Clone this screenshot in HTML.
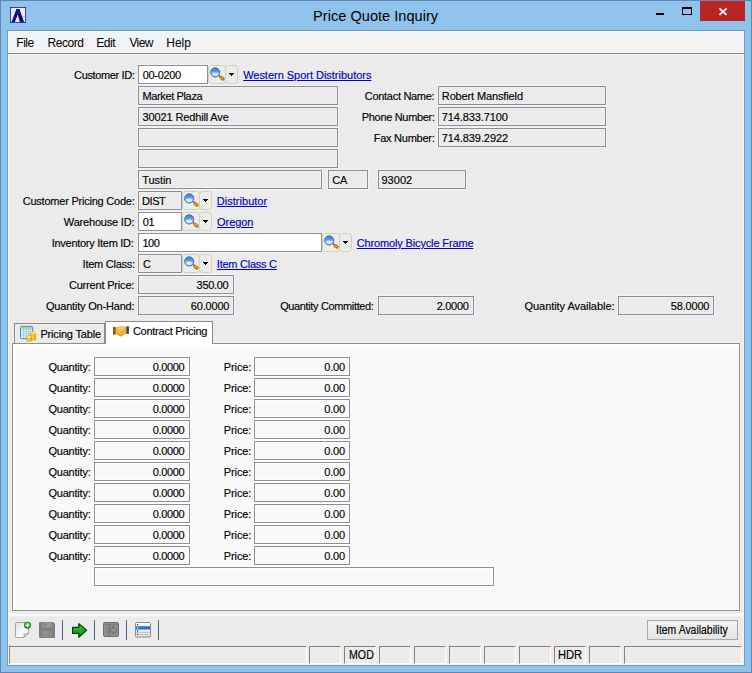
<!DOCTYPE html>
<html lang="en"><head><meta charset="utf-8"><title>Price Quote Inquiry</title>
<style>
html,body{margin:0;padding:0;}
body{width:752px;height:673px;overflow:hidden;position:relative;background:#8fc3eb;font-family:"Liberation Sans",Arial,sans-serif;}
.abs,.b,.t,.i,.sp{position:absolute;}
.b{box-sizing:content-box;}
.t{white-space:nowrap;line-height:20px;height:20px;-webkit-text-stroke:0.15px;}
.sp{top:646px;height:16px;border:1px solid;border-color:#8a846e #fff #fff #8a846e;background:#ebebeb;}
</style></head><body>
<svg width="0" height="0" style="position:absolute"><defs>
<linearGradient id="lens" x1="0" y1="0" x2="0" y2="1"><stop offset="0" stop-color="#3b86ea"/><stop offset="0.35" stop-color="#3f92f5"/><stop offset="0.6" stop-color="#8cc6ff"/><stop offset="1" stop-color="#7db8f5"/></linearGradient>
</defs></svg>
<!-- window frame -->
<div class="abs" style="left:0;top:0;width:750px;height:671px;border:1px solid #5f86b4;"></div>
<div class="abs" style="left:700px;top:1px;width:45px;height:20px;background:#b92525;"></div>
<svg class="i" style="left:640px;top:0" width="112" height="30" viewBox="640 0 112 30">
<rect x="656" y="13" width="8" height="2" fill="#000"/>
<rect x="682.5" y="8" width="9" height="6.5" fill="none" stroke="#000" stroke-width="1"/><rect x="682" y="7" width="10" height="2" fill="#000"/>
<path d="M719.4 8.3l7.2 6.5M726.6 8.3l-7.2 6.5" stroke="#fff" stroke-width="1.8" fill="none"/>
</svg>
<!-- app icon -->
<svg class="i" style="left:10px;top:7px" width="16" height="16" viewBox="10 7 16 16"><rect x="10.500" y="7.500" width="15" height="15" fill="#eeeefb" stroke="#3d3dba"/><path d="M10 7h1v1h-1zM25 7h1v1h-1zM10 22h1v1h-1zM25 22h1v1h-1z" fill="#15158f"/><path d="M13 17.200c3-1.200 8 .8 12-.8" stroke="#f2c24a" stroke-width="0.800" fill="none"/><path d="M11.600 22L16.400 8.900h3L24.100 22h-4.300L17.700 14.400 14.900 22z" fill="#0d0d8a"/></svg>
<!-- client -->
<div class="abs" style="left:7px;top:30px;width:736px;height:634px;border:1px solid #6f9ac6;background:#ebebeb;box-shadow:inset 0 0 0 1px #f6f5f3;"></div>
<div class="abs" style="left:9px;top:32px;width:734px;height:20px;background:#f2f3f5;"></div>
<div class="abs" style="left:8px;top:31px;width:736px;height:1px;background:#faf9f7;"></div>
<div class="abs" style="left:9px;top:52px;width:734px;height:1px;background:#f9fafb;"></div>
<div class="abs" style="left:8px;top:53px;width:736px;height:1px;background:#868686;"></div>
<div class="abs" style="left:9px;top:54px;width:734px;height:1px;background:#ffffff;"></div>
<div class="b" style="left:138px;top:65px;width:68px;height:17px;background:#ffffff;border:1px solid #8b8d9b;box-shadow:0 0 0 1px #f3f3f3;"></div>
<div class="b" style="left:138px;top:86px;width:198px;height:17px;background:#ebebeb;border:1px solid #8b8d9b;box-shadow:0 0 0 1px #f3f3f3, inset 0 0 0 1px #f0f0f0;"></div>
<div class="b" style="left:138px;top:107px;width:198px;height:17px;background:#ebebeb;border:1px solid #8b8d9b;box-shadow:0 0 0 1px #f3f3f3, inset 0 0 0 1px #f0f0f0;"></div>
<div class="b" style="left:138px;top:128px;width:198px;height:17px;background:#ebebeb;border:1px solid #8b8d9b;box-shadow:0 0 0 1px #f3f3f3, inset 0 0 0 1px #f0f0f0;"></div>
<div class="b" style="left:138px;top:149px;width:198px;height:17px;background:#ebebeb;border:1px solid #8b8d9b;box-shadow:0 0 0 1px #f3f3f3, inset 0 0 0 1px #f0f0f0;"></div>
<div class="b" style="left:138px;top:170px;width:182px;height:17px;background:#ebebeb;border:1px solid #8b8d9b;box-shadow:0 0 0 1px #f3f3f3, inset 0 0 0 1px #f0f0f0;"></div>
<div class="b" style="left:328px;top:170px;width:38px;height:17px;background:#ebebeb;border:1px solid #8b8d9b;box-shadow:0 0 0 1px #f3f3f3, inset 0 0 0 1px #f0f0f0;"></div>
<div class="b" style="left:378px;top:170px;width:86px;height:17px;background:#ebebeb;border:1px solid #8b8d9b;box-shadow:0 0 0 1px #f3f3f3, inset 0 0 0 1px #f0f0f0;"></div>
<div class="b" style="left:438px;top:86px;width:166px;height:17px;background:#ebebeb;border:1px solid #8b8d9b;box-shadow:0 0 0 1px #f3f3f3, inset 0 0 0 1px #f0f0f0;"></div>
<div class="b" style="left:438px;top:107px;width:166px;height:17px;background:#ebebeb;border:1px solid #8b8d9b;box-shadow:0 0 0 1px #f3f3f3, inset 0 0 0 1px #f0f0f0;"></div>
<div class="b" style="left:438px;top:128px;width:166px;height:17px;background:#ebebeb;border:1px solid #8b8d9b;box-shadow:0 0 0 1px #f3f3f3, inset 0 0 0 1px #f0f0f0;"></div>
<div class="b" style="left:138px;top:191px;width:42px;height:17px;background:#ebebeb;border:1px solid #8b8d9b;box-shadow:0 0 0 1px #f3f3f3, inset 0 0 0 1px #f0f0f0;"></div>
<div class="b" style="left:138px;top:212px;width:42px;height:17px;background:#ffffff;border:1px solid #8b8d9b;box-shadow:0 0 0 1px #f3f3f3;"></div>
<div class="b" style="left:138px;top:233px;width:182px;height:17px;background:#ffffff;border:1px solid #8b8d9b;box-shadow:0 0 0 1px #f3f3f3;"></div>
<div class="b" style="left:138px;top:254px;width:42px;height:17px;background:#ebebeb;border:1px solid #8b8d9b;box-shadow:0 0 0 1px #f3f3f3, inset 0 0 0 1px #f0f0f0;"></div>
<div class="b" style="left:138px;top:275px;width:94px;height:17px;background:#ebebeb;border:1px solid #8b8d9b;box-shadow:0 0 0 1px #f3f3f3, inset 0 0 0 1px #f0f0f0;"></div>
<div class="b" style="left:138px;top:296px;width:94px;height:17px;background:#ebebeb;border:1px solid #8b8d9b;box-shadow:0 0 0 1px #f3f3f3, inset 0 0 0 1px #f0f0f0;"></div>
<div class="b" style="left:378px;top:296px;width:94px;height:17px;background:#ebebeb;border:1px solid #8b8d9b;box-shadow:0 0 0 1px #f3f3f3, inset 0 0 0 1px #f0f0f0;"></div>
<div class="b" style="left:618px;top:296px;width:94px;height:17px;background:#ebebeb;border:1px solid #8b8d9b;box-shadow:0 0 0 1px #f3f3f3, inset 0 0 0 1px #f0f0f0;"></div>
<svg class="i" style="left:208px;top:65px" width="18" height="19" viewBox="0 0 18 19">
<rect x="0.5" y="0.5" width="17" height="18" rx="3" fill="#ececeb" stroke="#d0d0bd"/>
<line x1="11" y1="10.6" x2="13" y2="12" stroke="#6a4a3a" stroke-width="1.5"/>
<line x1="13.2" y1="12.6" x2="14.9" y2="13.9" stroke="#9a5a10" stroke-width="3.4" stroke-linecap="round"/>
<line x1="13.2" y1="12.5" x2="14.8" y2="13.7" stroke="#f59a0a" stroke-width="2.2" stroke-linecap="round"/>
<circle cx="7.2" cy="7.4" r="4.6" fill="url(#lens)" stroke="#5e6690" stroke-width="1"/>
<ellipse cx="7.2" cy="9.3" rx="3" ry="1.7" fill="#e6f5ff" opacity="0.85"/>
</svg><svg class="i" style="left:225px;top:65px" width="13" height="19" viewBox="0 0 13 19">
<rect x="0.5" y="0.5" width="12" height="18" rx="3" fill="#ececeb" stroke="#d0d0bd"/>
<path d="M4 8h5v1h-1v1h-1v1h-1v-1h-1v-1h-1z" fill="#000"/>
</svg><svg class="i" style="left:182px;top:191px" width="18" height="19" viewBox="0 0 18 19">
<rect x="0.5" y="0.5" width="17" height="18" rx="3" fill="#ececeb" stroke="#d0d0bd"/>
<line x1="11" y1="10.6" x2="13" y2="12" stroke="#6a4a3a" stroke-width="1.5"/>
<line x1="13.2" y1="12.6" x2="14.9" y2="13.9" stroke="#9a5a10" stroke-width="3.4" stroke-linecap="round"/>
<line x1="13.2" y1="12.5" x2="14.8" y2="13.7" stroke="#f59a0a" stroke-width="2.2" stroke-linecap="round"/>
<circle cx="7.2" cy="7.4" r="4.6" fill="url(#lens)" stroke="#5e6690" stroke-width="1"/>
<ellipse cx="7.2" cy="9.3" rx="3" ry="1.7" fill="#e6f5ff" opacity="0.85"/>
</svg><svg class="i" style="left:199px;top:191px" width="13" height="19" viewBox="0 0 13 19">
<rect x="0.5" y="0.5" width="12" height="18" rx="3" fill="#ececeb" stroke="#d0d0bd"/>
<path d="M4 8h5v1h-1v1h-1v1h-1v-1h-1v-1h-1z" fill="#000"/>
</svg><svg class="i" style="left:182px;top:212px" width="18" height="19" viewBox="0 0 18 19">
<rect x="0.5" y="0.5" width="17" height="18" rx="3" fill="#ececeb" stroke="#d0d0bd"/>
<line x1="11" y1="10.6" x2="13" y2="12" stroke="#6a4a3a" stroke-width="1.5"/>
<line x1="13.2" y1="12.6" x2="14.9" y2="13.9" stroke="#9a5a10" stroke-width="3.4" stroke-linecap="round"/>
<line x1="13.2" y1="12.5" x2="14.8" y2="13.7" stroke="#f59a0a" stroke-width="2.2" stroke-linecap="round"/>
<circle cx="7.2" cy="7.4" r="4.6" fill="url(#lens)" stroke="#5e6690" stroke-width="1"/>
<ellipse cx="7.2" cy="9.3" rx="3" ry="1.7" fill="#e6f5ff" opacity="0.85"/>
</svg><svg class="i" style="left:199px;top:212px" width="13" height="19" viewBox="0 0 13 19">
<rect x="0.5" y="0.5" width="12" height="18" rx="3" fill="#ececeb" stroke="#d0d0bd"/>
<path d="M4 8h5v1h-1v1h-1v1h-1v-1h-1v-1h-1z" fill="#000"/>
</svg><svg class="i" style="left:322px;top:233px" width="18" height="19" viewBox="0 0 18 19">
<rect x="0.5" y="0.5" width="17" height="18" rx="3" fill="#ececeb" stroke="#d0d0bd"/>
<line x1="11" y1="10.6" x2="13" y2="12" stroke="#6a4a3a" stroke-width="1.5"/>
<line x1="13.2" y1="12.6" x2="14.9" y2="13.9" stroke="#9a5a10" stroke-width="3.4" stroke-linecap="round"/>
<line x1="13.2" y1="12.5" x2="14.8" y2="13.7" stroke="#f59a0a" stroke-width="2.2" stroke-linecap="round"/>
<circle cx="7.2" cy="7.4" r="4.6" fill="url(#lens)" stroke="#5e6690" stroke-width="1"/>
<ellipse cx="7.2" cy="9.3" rx="3" ry="1.7" fill="#e6f5ff" opacity="0.85"/>
</svg><svg class="i" style="left:339px;top:233px" width="13" height="19" viewBox="0 0 13 19">
<rect x="0.5" y="0.5" width="12" height="18" rx="3" fill="#ececeb" stroke="#d0d0bd"/>
<path d="M4 8h5v1h-1v1h-1v1h-1v-1h-1v-1h-1z" fill="#000"/>
</svg><svg class="i" style="left:182px;top:254px" width="18" height="19" viewBox="0 0 18 19">
<rect x="0.5" y="0.5" width="17" height="18" rx="3" fill="#ececeb" stroke="#d0d0bd"/>
<line x1="11" y1="10.6" x2="13" y2="12" stroke="#6a4a3a" stroke-width="1.5"/>
<line x1="13.2" y1="12.6" x2="14.9" y2="13.9" stroke="#9a5a10" stroke-width="3.4" stroke-linecap="round"/>
<line x1="13.2" y1="12.5" x2="14.8" y2="13.7" stroke="#f59a0a" stroke-width="2.2" stroke-linecap="round"/>
<circle cx="7.2" cy="7.4" r="4.6" fill="url(#lens)" stroke="#5e6690" stroke-width="1"/>
<ellipse cx="7.2" cy="9.3" rx="3" ry="1.7" fill="#e6f5ff" opacity="0.85"/>
</svg><svg class="i" style="left:199px;top:254px" width="13" height="19" viewBox="0 0 13 19">
<rect x="0.5" y="0.5" width="12" height="18" rx="3" fill="#ececeb" stroke="#d0d0bd"/>
<path d="M4 8h5v1h-1v1h-1v1h-1v-1h-1v-1h-1z" fill="#000"/>
</svg>
<!-- tabs -->
<div class="abs" style="left:11px;top:342px;width:730px;height:270px;background:#f2f2f2;"></div>
<div class="abs" style="left:12px;top:343px;width:726px;height:266px;background:linear-gradient(#fff 0,#fff 3px,#f9f9f9 4px);border:1px solid #8e8e8e;box-shadow:inset 1px 0 0 #fff, inset 0 -1px 0 #fff;"></div>
<div class="abs" style="left:14px;top:323px;width:91px;height:20px;background:#ebebeb;border:1px solid #8c8c8c;border-bottom:none;box-sizing:border-box;"></div>
<div class="abs" style="left:105px;top:321px;width:108px;height:23px;background:#ffffff;border:1px solid #8c8c8c;border-bottom:none;box-sizing:border-box;"></div>
<div class="b" style="left:94px;top:357px;width:94px;height:17px;background:#f9f9f9;border:1px solid #8b8d9b;box-shadow:0 0 0 1px #fff, inset 0 0 0 1px #fff"></div>
<div class="b" style="left:254px;top:357px;width:94px;height:17px;background:#f9f9f9;border:1px solid #8b8d9b;box-shadow:0 0 0 1px #fff, inset 0 0 0 1px #fff"></div>
<div class="b" style="left:94px;top:378px;width:94px;height:17px;background:#f9f9f9;border:1px solid #8b8d9b;box-shadow:0 0 0 1px #fff, inset 0 0 0 1px #fff"></div>
<div class="b" style="left:254px;top:378px;width:94px;height:17px;background:#f9f9f9;border:1px solid #8b8d9b;box-shadow:0 0 0 1px #fff, inset 0 0 0 1px #fff"></div>
<div class="b" style="left:94px;top:399px;width:94px;height:17px;background:#f9f9f9;border:1px solid #8b8d9b;box-shadow:0 0 0 1px #fff, inset 0 0 0 1px #fff"></div>
<div class="b" style="left:254px;top:399px;width:94px;height:17px;background:#f9f9f9;border:1px solid #8b8d9b;box-shadow:0 0 0 1px #fff, inset 0 0 0 1px #fff"></div>
<div class="b" style="left:94px;top:420px;width:94px;height:17px;background:#f9f9f9;border:1px solid #8b8d9b;box-shadow:0 0 0 1px #fff, inset 0 0 0 1px #fff"></div>
<div class="b" style="left:254px;top:420px;width:94px;height:17px;background:#f9f9f9;border:1px solid #8b8d9b;box-shadow:0 0 0 1px #fff, inset 0 0 0 1px #fff"></div>
<div class="b" style="left:94px;top:441px;width:94px;height:17px;background:#f9f9f9;border:1px solid #8b8d9b;box-shadow:0 0 0 1px #fff, inset 0 0 0 1px #fff"></div>
<div class="b" style="left:254px;top:441px;width:94px;height:17px;background:#f9f9f9;border:1px solid #8b8d9b;box-shadow:0 0 0 1px #fff, inset 0 0 0 1px #fff"></div>
<div class="b" style="left:94px;top:462px;width:94px;height:17px;background:#f9f9f9;border:1px solid #8b8d9b;box-shadow:0 0 0 1px #fff, inset 0 0 0 1px #fff"></div>
<div class="b" style="left:254px;top:462px;width:94px;height:17px;background:#f9f9f9;border:1px solid #8b8d9b;box-shadow:0 0 0 1px #fff, inset 0 0 0 1px #fff"></div>
<div class="b" style="left:94px;top:483px;width:94px;height:17px;background:#f9f9f9;border:1px solid #8b8d9b;box-shadow:0 0 0 1px #fff, inset 0 0 0 1px #fff"></div>
<div class="b" style="left:254px;top:483px;width:94px;height:17px;background:#f9f9f9;border:1px solid #8b8d9b;box-shadow:0 0 0 1px #fff, inset 0 0 0 1px #fff"></div>
<div class="b" style="left:94px;top:504px;width:94px;height:17px;background:#f9f9f9;border:1px solid #8b8d9b;box-shadow:0 0 0 1px #fff, inset 0 0 0 1px #fff"></div>
<div class="b" style="left:254px;top:504px;width:94px;height:17px;background:#f9f9f9;border:1px solid #8b8d9b;box-shadow:0 0 0 1px #fff, inset 0 0 0 1px #fff"></div>
<div class="b" style="left:94px;top:525px;width:94px;height:17px;background:#f9f9f9;border:1px solid #8b8d9b;box-shadow:0 0 0 1px #fff, inset 0 0 0 1px #fff"></div>
<div class="b" style="left:254px;top:525px;width:94px;height:17px;background:#f9f9f9;border:1px solid #8b8d9b;box-shadow:0 0 0 1px #fff, inset 0 0 0 1px #fff"></div>
<div class="b" style="left:94px;top:546px;width:94px;height:17px;background:#f9f9f9;border:1px solid #8b8d9b;box-shadow:0 0 0 1px #fff, inset 0 0 0 1px #fff"></div>
<div class="b" style="left:254px;top:546px;width:94px;height:17px;background:#f9f9f9;border:1px solid #8b8d9b;box-shadow:0 0 0 1px #fff, inset 0 0 0 1px #fff"></div>
<div class="b" style="left:94px;top:567px;width:398px;height:17px;background:#f9f9f9;border:1px solid #8b8d9b;box-shadow:0 0 0 1px #fff, inset 0 0 0 1px #fff"></div>
<!-- toolbar -->
<div class="abs" style="left:9px;top:614px;width:734px;height:1px;background:#fff;"></div><div class="abs" style="left:9px;top:615px;width:734px;height:1px;background:#f6f8fb;"></div><div class="abs" style="left:9px;top:616px;width:734px;height:1px;background:#eceff3;"></div>
<div class="abs" style="left:62px;top:620px;width:1px;height:20px;background:#4d6382;"></div>
<div class="abs" style="left:94px;top:620px;width:1px;height:20px;background:#4d6382;"></div>
<div class="abs" style="left:126px;top:620px;width:1px;height:20px;background:#4d6382;"></div>
<div class="abs" style="left:158px;top:620px;width:1px;height:20px;background:#4d6382;"></div>
<div class="abs" style="left:647px;top:620px;width:91px;height:20px;box-sizing:border-box;border:1px solid #a8a8a8;background:linear-gradient(#f3f3f3,#e3e3e3);"></div>

<!-- new doc -->
<svg class="i" style="left:14px;top:620px" width="20" height="20" viewBox="14 620 20 20">
<defs><linearGradient id="pg" x1="0" y1="0" x2="1" y2="1"><stop offset="0" stop-color="#dedfdf"/><stop offset="0.5" stop-color="#f6f6f6"/><stop offset="1" stop-color="#ffffff"/></linearGradient>
<radialGradient id="gp" cx="0.5" cy="0.35" r="0.7"><stop offset="0" stop-color="#3cc43c"/><stop offset="1" stop-color="#0c8a10"/></radialGradient></defs>
<path d="M16.5 622.5h9.5l2.5 2.5v8l-4.5 4.5h-7.5a1 1 0 0 1-1-1v-13a1 1 0 0 1 1-1z" fill="url(#pg)" stroke="#a2a2a2"/>
<path d="M28.3 633.2l-4.2 4.2c.4-1.6.2-2.6-.3-3.6 1.400.5 3 .4 4.500-.6z" fill="#fdfdfd" stroke="#8d8d8d" stroke-width="0.8"/>
<circle cx="27.500" cy="625.300" r="3.300" fill="url(#gp)" stroke="#0a7a0e" stroke-width="0.500"/>
<path d="M27.500 623.300v4M25.500 625.300h4" stroke="#fff" stroke-width="1.300"/>
</svg>
<!-- save (disabled) -->
<svg class="i" style="left:38px;top:620px" width="20" height="20" viewBox="38 620 20 20">
<path d="M40 622h13.200l1.800 1.800v13.200a1 1 0 0 1-1 1h-14a1 1 0 0 1-1-1v-14a1 1 0 0 1 1-1z" fill="#7f7f7f"/>
<rect x="42" y="622.500" width="10" height="5" fill="#959595"/><rect x="44" y="623.300" width="1.300" height="3" fill="#7a7a7a"/>
<rect x="42.500" y="631.300" width="9" height="5.200" fill="#929292" stroke="#8a8a8a" stroke-width="0.600"/><path d="M43.500 633.200h7M43.500 634.800h7" stroke="#858585" stroke-width="0.700"/>
</svg>
<!-- green arrow -->
<svg class="i" style="left:70px;top:620px" width="20" height="20" viewBox="70 620 20 20">
<defs><linearGradient id="ga" x1="0" y1="0" x2="0" y2="1"><stop offset="0" stop-color="#35c935"/><stop offset="0.5" stop-color="#1eac22"/><stop offset="1" stop-color="#0e8a14"/></linearGradient></defs>
<path d="M72.600 627.300h6.200v-3.700l7.800 6.700-7.800 6.900v-3.800h-6.200z" fill="url(#ga)" stroke="#093d0b" stroke-width="1.200" stroke-linejoin="round"/>
</svg>
<!-- gray export icon -->
<svg class="i" style="left:102px;top:620px" width="20" height="20" viewBox="102 620 20 20">
<rect x="103.500" y="622.500" width="15" height="14" rx="1.200" fill="#8f8f8f" stroke="#6e6e6e" stroke-width="1"/>
<path d="M104.500 624.400h13" stroke="#787878" stroke-width="0.800"/>
<path d="M109.400 624.400v12" stroke="#6e6e6e" stroke-width="0.900"/>
<path d="M106.900 626.400h1M106.900 628.700h1M106.900 631h1M106.900 633.300h1" stroke="#666" stroke-width="1"/>
<path d="M110.600 628.300h2.500v-2.200l3.900 4.100-3.900 4.100v-2.200h-2.500z" fill="#929292" stroke="#6a6a6a" stroke-width="0.900" stroke-linejoin="round"/>
</svg>
<!-- list icon -->
<svg class="i" style="left:134px;top:620px" width="20" height="20" viewBox="134 620 20 20">
<defs><linearGradient id="li" x1="0" y1="0" x2="0" y2="1"><stop offset="0" stop-color="#ffffff"/><stop offset="1" stop-color="#e2e2e2"/></linearGradient></defs>
<rect x="135.500" y="622.500" width="15" height="14.500" rx="1.200" fill="url(#li)" stroke="#8a8a8a"/>
<rect x="136" y="626.200" width="14" height="3.300" fill="#1f74dc"/>
<path d="M136 632.500h14" stroke="#bdbdbd" stroke-width="0.800"/>
<rect x="137" y="624" width="1.200" height="1.200" fill="#222"/><rect x="137" y="627.300" width="1.200" height="1.200" fill="#fff"/><rect x="137" y="630.300" width="1.200" height="1.200" fill="#222"/><rect x="137" y="633.800" width="1.200" height="1.200" fill="#222"/>
<path d="M139.500 634.400h9" stroke="#b0b0b0" stroke-width="0.800"/>
</svg>
<!-- tab icon: pricing table -->
<svg class="i" style="left:19px;top:324px" width="19" height="19" viewBox="19 324 19 19">
<defs><linearGradient id="gold" x1="0" y1="0" x2="1" y2="0"><stop offset="0" stop-color="#e9a400"/><stop offset="0.45" stop-color="#ffd83a"/><stop offset="1" stop-color="#e69a00"/></linearGradient></defs>
<rect x="20.500" y="326.400" width="12.200" height="12.200" rx="1" fill="#eaf6ff" stroke="#3f8cc6" stroke-width="1"/>
<rect x="21.300" y="327.200" width="10.600" height="1.400" fill="#f7b620"/>
<path d="M21.300 329.300h10.600M21.300 331.500h10.600M21.300 333.700h10.600M21.300 335.900h10.600M23.800 327v11M26.400 327v11M28.600 327v11M30.300 327v11" stroke="#8cc4ee" stroke-width="0.700"/>
<rect x="30.300" y="332.400" width="5.500" height="7.800" rx="1.500" fill="url(#gold)" stroke="#d89000" stroke-width="0.500"/>
<ellipse cx="33.050" cy="333" rx="2.700" ry="1" fill="#ffe36a"/>
<path d="M30.400 335h5.300M30.400 337.200h5.300" stroke="#f0b010" stroke-width="0.600"/>
<rect x="26.300" y="336.200" width="5.300" height="5" rx="1.500" fill="url(#gold)" stroke="#d89000" stroke-width="0.500"/>
<ellipse cx="28.950" cy="336.900" rx="2.600" ry="1" fill="#ffe36a"/>
</svg>
<!-- tab icon: handshake -->
<svg class="i" style="left:112px;top:324px" width="19" height="15" viewBox="112 324 19 15">
<defs><radialGradient id="hs" cx="0.45" cy="0.3" r="0.8"><stop offset="0" stop-color="#fbd48a"/><stop offset="0.6" stop-color="#f4ae28"/><stop offset="1" stop-color="#e89a10"/></radialGradient></defs>
<path d="M115.600 327.400c2-.6 3.400-1.500 5.200-1.500 1.700 0 3.600.7 5.800 1.200v6c-1.500 1-3.200 2.400-5.300 3.300-1.600.3-3.800-1.500-5.700-2.700z" fill="url(#hs)"/>
<path d="M118 329.500l4 3.500M120 328.600l4 3.400M117.500 332l2.500 2.300" stroke="#e0962a" stroke-width="0.600" fill="none"/>
<rect x="113" y="327" width="2.700" height="7.600" fill="#8c5a0e"/>
<rect x="126.400" y="326.200" width="2.500" height="7.700" fill="#3a4152"/>
</svg>

<!-- status -->
<div class="sp" style="left:9px;width:296px"></div>
<div class="sp" style="left:309px;width:30px"></div>
<div class="sp" style="left:344px;width:30px"></div>
<div class="sp" style="left:379px;width:30px"></div>
<div class="sp" style="left:414px;width:30px"></div>
<div class="sp" style="left:449px;width:30px"></div>
<div class="sp" style="left:484px;width:30px"></div>
<div class="sp" style="left:519px;width:30px"></div>
<div class="sp" style="left:554px;width:30px"></div>
<div class="sp" style="left:589px;width:30px"></div>
<div class="sp" style="left:624px;width:116px"></div>

<span class="t" style="left:313.08px;top:6.00px;font-size:14.5px;color:#000;letter-spacing:0.05px;-webkit-text-stroke:0;">Price Quote Inquiry</span>
<span class="t" style="left:16.29px;top:33.00px;font-size:12px;color:#000;letter-spacing:-0.46px;-webkit-text-stroke:0;">File</span>
<span class="t" style="left:47.55px;top:33.00px;font-size:12px;color:#000;letter-spacing:-0.48px;-webkit-text-stroke:0;">Record</span>
<span class="t" style="left:96.14px;top:33.00px;font-size:12px;color:#000;letter-spacing:-0.40px;-webkit-text-stroke:0;">Edit</span>
<span class="t" style="left:129.38px;top:33.00px;font-size:12px;color:#000;letter-spacing:-0.58px;-webkit-text-stroke:0;">View</span>
<span class="t" style="left:166.35px;top:33.00px;font-size:12px;color:#000;letter-spacing:-0.07px;-webkit-text-stroke:0;">Help</span>
<span class="t" style="left:74.10px;top:65.00px;font-size:11px;color:#000;letter-spacing:-0.37px;">Customer ID:</span>
<span class="t" style="left:22.67px;top:191.00px;font-size:11px;color:#000;letter-spacing:-0.22px;">Customer Pricing Code:</span>
<span class="t" style="left:63.86px;top:212.00px;font-size:11px;color:#000;letter-spacing:-0.19px;">Warehouse ID:</span>
<span class="t" style="left:51.76px;top:233.00px;font-size:11px;color:#000;letter-spacing:-0.28px;">Inventory Item ID:</span>
<span class="t" style="left:82.61px;top:254.00px;font-size:11px;color:#000;letter-spacing:-0.25px;">Item Class:</span>
<span class="t" style="left:68.89px;top:275.00px;font-size:11px;color:#000;letter-spacing:-0.18px;">Current Price:</span>
<span class="t" style="left:45.93px;top:296.00px;font-size:11px;color:#000;letter-spacing:-0.19px;">Quantity On-Hand:</span>
<span class="t" style="left:364.83px;top:86.00px;font-size:11px;color:#000;letter-spacing:-0.30px;">Contact Name:</span>
<span class="t" style="left:361.78px;top:107.00px;font-size:11px;color:#000;letter-spacing:-0.32px;">Phone Number:</span>
<span class="t" style="left:373.66px;top:128.00px;font-size:11px;color:#000;letter-spacing:-0.24px;">Fax Number:</span>
<span class="t" style="left:280.14px;top:296.00px;font-size:11px;color:#000;letter-spacing:-0.36px;">Quantity Committed:</span>
<span class="t" style="left:524.50px;top:296.00px;font-size:11px;color:#000;letter-spacing:-0.05px;">Quantity Available:</span>
<span class="t" style="left:142.71px;top:65.00px;font-size:11px;color:#000;letter-spacing:-0.32px;">00-0200</span>
<span class="t" style="left:142.41px;top:86.00px;font-size:11px;color:#000;letter-spacing:-0.36px;">Market Plaza</span>
<span class="t" style="left:142.62px;top:107.00px;font-size:11px;color:#000;letter-spacing:-0.14px;">30021 Redhill Ave</span>
<span class="t" style="left:142.30px;top:170.00px;font-size:11px;color:#000;letter-spacing:-0.10px;">Tustin</span>
<span class="t" style="left:332.28px;top:170.00px;font-size:11px;color:#000;letter-spacing:-0.30px;">CA</span>
<span class="t" style="left:381.45px;top:170.00px;font-size:11px;color:#000;letter-spacing:0.03px;">93002</span>
<span class="t" style="left:441.82px;top:86.00px;font-size:11px;color:#000;letter-spacing:-0.13px;">Robert Mansfield</span>
<span class="t" style="left:441.77px;top:107.00px;font-size:11px;color:#000;letter-spacing:-0.11px;">714.833.7100</span>
<span class="t" style="left:441.78px;top:128.00px;font-size:11px;color:#000;letter-spacing:-0.09px;">714.839.2922</span>
<span class="t" style="left:142.12px;top:191.00px;font-size:11px;color:#000;letter-spacing:-0.45px;">DIST</span>
<span class="t" style="left:142.76px;top:212.00px;font-size:11px;color:#000;letter-spacing:-0.30px;">01</span>
<span class="t" style="left:142.40px;top:233.00px;font-size:11px;color:#000;letter-spacing:-0.45px;">100</span>
<span class="t" style="left:142.92px;top:254.00px;font-size:11px;color:#000;letter-spacing:-0.30px;">C</span>
<span class="t" style="left:196.57px;top:275.00px;font-size:11px;color:#000;letter-spacing:-0.30px;">350.00</span>
<span class="t" style="left:190.76px;top:296.00px;font-size:11px;color:#000;letter-spacing:-0.18px;">60.0000</span>
<span class="t" style="left:436.71px;top:296.00px;font-size:11px;color:#000;letter-spacing:-0.29px;">2.0000</span>
<span class="t" style="left:670.77px;top:296.00px;font-size:11px;color:#000;letter-spacing:-0.18px;">58.0000</span>
<span class="t" style="left:243.13px;top:65.00px;font-size:11px;color:#0000c0;letter-spacing:-0.02px;text-decoration:underline;">Western Sport Distributors</span>
<span class="t" style="left:216.83px;top:191.00px;font-size:11px;color:#0000c0;letter-spacing:0.02px;text-decoration:underline;">Distributor</span>
<span class="t" style="left:217.08px;top:212.00px;font-size:11px;color:#0000c0;letter-spacing:-0.08px;text-decoration:underline;">Oregon</span>
<span class="t" style="left:356.66px;top:233.00px;font-size:11px;color:#0000c0;letter-spacing:-0.14px;text-decoration:underline;">Chromoly Bicycle Frame</span>
<span class="t" style="left:216.85px;top:254.00px;font-size:11px;color:#0000c0;letter-spacing:-0.25px;text-decoration:underline;">Item Class C</span>
<span class="t" style="left:40.43px;top:324.00px;font-size:11px;color:#000;letter-spacing:-0.18px;">Pricing Table</span>
<span class="t" style="left:132.88px;top:321.00px;font-size:11px;color:#000;letter-spacing:-0.25px;">Contract Pricing</span>
<span class="t" style="left:48.41px;top:357.00px;font-size:11px;color:#000;letter-spacing:-0.20px;">Quantity:</span>
<span class="t" style="left:152.67px;top:357.00px;font-size:11px;color:#000;letter-spacing:-0.32px;">0.0000</span>
<span class="t" style="left:223.71px;top:357.00px;font-size:11px;color:#000;letter-spacing:-0.09px;">Price:</span>
<span class="t" style="left:324.33px;top:357.00px;font-size:11px;color:#000;letter-spacing:-0.20px;">0.00</span>
<span class="t" style="left:48.41px;top:378.00px;font-size:11px;color:#000;letter-spacing:-0.20px;">Quantity:</span>
<span class="t" style="left:152.67px;top:378.00px;font-size:11px;color:#000;letter-spacing:-0.32px;">0.0000</span>
<span class="t" style="left:223.71px;top:378.00px;font-size:11px;color:#000;letter-spacing:-0.09px;">Price:</span>
<span class="t" style="left:324.33px;top:378.00px;font-size:11px;color:#000;letter-spacing:-0.20px;">0.00</span>
<span class="t" style="left:48.41px;top:399.00px;font-size:11px;color:#000;letter-spacing:-0.20px;">Quantity:</span>
<span class="t" style="left:152.67px;top:399.00px;font-size:11px;color:#000;letter-spacing:-0.32px;">0.0000</span>
<span class="t" style="left:223.71px;top:399.00px;font-size:11px;color:#000;letter-spacing:-0.09px;">Price:</span>
<span class="t" style="left:324.33px;top:399.00px;font-size:11px;color:#000;letter-spacing:-0.20px;">0.00</span>
<span class="t" style="left:48.41px;top:420.00px;font-size:11px;color:#000;letter-spacing:-0.20px;">Quantity:</span>
<span class="t" style="left:152.67px;top:420.00px;font-size:11px;color:#000;letter-spacing:-0.32px;">0.0000</span>
<span class="t" style="left:223.71px;top:420.00px;font-size:11px;color:#000;letter-spacing:-0.09px;">Price:</span>
<span class="t" style="left:324.33px;top:420.00px;font-size:11px;color:#000;letter-spacing:-0.20px;">0.00</span>
<span class="t" style="left:48.41px;top:441.00px;font-size:11px;color:#000;letter-spacing:-0.20px;">Quantity:</span>
<span class="t" style="left:152.67px;top:441.00px;font-size:11px;color:#000;letter-spacing:-0.32px;">0.0000</span>
<span class="t" style="left:223.71px;top:441.00px;font-size:11px;color:#000;letter-spacing:-0.09px;">Price:</span>
<span class="t" style="left:324.33px;top:441.00px;font-size:11px;color:#000;letter-spacing:-0.20px;">0.00</span>
<span class="t" style="left:48.41px;top:462.00px;font-size:11px;color:#000;letter-spacing:-0.20px;">Quantity:</span>
<span class="t" style="left:152.67px;top:462.00px;font-size:11px;color:#000;letter-spacing:-0.32px;">0.0000</span>
<span class="t" style="left:223.71px;top:462.00px;font-size:11px;color:#000;letter-spacing:-0.09px;">Price:</span>
<span class="t" style="left:324.33px;top:462.00px;font-size:11px;color:#000;letter-spacing:-0.20px;">0.00</span>
<span class="t" style="left:48.41px;top:483.00px;font-size:11px;color:#000;letter-spacing:-0.20px;">Quantity:</span>
<span class="t" style="left:152.67px;top:483.00px;font-size:11px;color:#000;letter-spacing:-0.32px;">0.0000</span>
<span class="t" style="left:223.71px;top:483.00px;font-size:11px;color:#000;letter-spacing:-0.09px;">Price:</span>
<span class="t" style="left:324.33px;top:483.00px;font-size:11px;color:#000;letter-spacing:-0.20px;">0.00</span>
<span class="t" style="left:48.41px;top:504.00px;font-size:11px;color:#000;letter-spacing:-0.20px;">Quantity:</span>
<span class="t" style="left:152.67px;top:504.00px;font-size:11px;color:#000;letter-spacing:-0.32px;">0.0000</span>
<span class="t" style="left:223.71px;top:504.00px;font-size:11px;color:#000;letter-spacing:-0.09px;">Price:</span>
<span class="t" style="left:324.33px;top:504.00px;font-size:11px;color:#000;letter-spacing:-0.20px;">0.00</span>
<span class="t" style="left:48.41px;top:525.00px;font-size:11px;color:#000;letter-spacing:-0.20px;">Quantity:</span>
<span class="t" style="left:152.67px;top:525.00px;font-size:11px;color:#000;letter-spacing:-0.32px;">0.0000</span>
<span class="t" style="left:223.71px;top:525.00px;font-size:11px;color:#000;letter-spacing:-0.09px;">Price:</span>
<span class="t" style="left:324.33px;top:525.00px;font-size:11px;color:#000;letter-spacing:-0.20px;">0.00</span>
<span class="t" style="left:48.41px;top:546.00px;font-size:11px;color:#000;letter-spacing:-0.20px;">Quantity:</span>
<span class="t" style="left:152.67px;top:546.00px;font-size:11px;color:#000;letter-spacing:-0.32px;">0.0000</span>
<span class="t" style="left:223.71px;top:546.00px;font-size:11px;color:#000;letter-spacing:-0.09px;">Price:</span>
<span class="t" style="left:324.33px;top:546.00px;font-size:11px;color:#000;letter-spacing:-0.20px;">0.00</span>
<span class="t" style="left:655.62px;top:620.00px;font-size:12px;color:#000;letter-spacing:0.00px;transform:scaleX(0.870);transform-origin:0 0;">Item Availability</span>
<span class="t" style="left:348.69px;top:645.00px;font-size:12px;color:#000;letter-spacing:0.00px;transform:scaleX(0.886);transform-origin:0 0;">MOD</span>
<span class="t" style="left:558.14px;top:645.00px;font-size:12px;color:#000;letter-spacing:0.00px;transform:scaleX(0.929);transform-origin:0 0;">HDR</span>
</body></html>
